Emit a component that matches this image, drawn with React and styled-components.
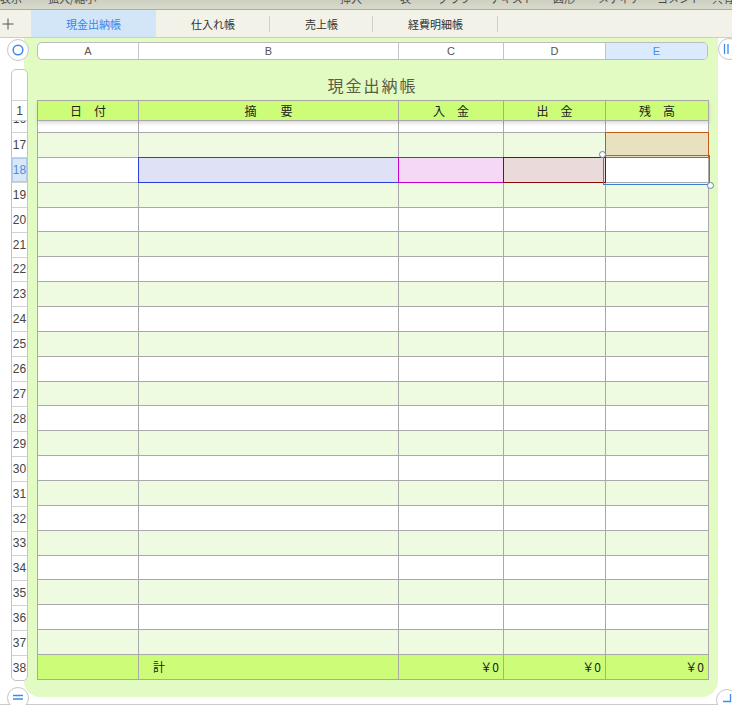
import React from 'react';
import styled, { createGlobalStyle } from 'styled-components';

const GlobalStyle = createGlobalStyle`
  html, body {
    margin: 0;
    padding: 0;
    background: #fff;
  }
  body {
    font-family: "Noto Sans CJK JP", "Noto Sans", sans-serif;
  }
`;

// column widths of the sheet (A..E), last one takes the rest
const GRID = '101px 260px 105px 102px 1fr';
const SHEET_W = 671;
const LINE = '#a9a9a9';
const BLUE = '#3d8be8';

const menu = [
  { label: '表示', w: 48 },
  { label: '拡大/縮小', w: 292 },
  { label: '挿入', w: 60 },
  { label: '表', w: 38 },
  { label: 'グラフ', w: 52 },
  { label: 'テキスト', w: 63 },
  { label: '図形', w: 45 },
  { label: 'メディア', w: 59 },
  { label: 'コメント', w: 55 },
  { label: '共有', w: 30 },
];

const tabs = [
  { label: '現金出納帳', active: true },
  { label: '仕入れ帳', sep: true },
  { label: '売上帳', sep: true },
  { label: '経費明細帳', sep: true },
];

const heads = ['日　付', '摘　　要', '入　金', '出　金', '残　高'];
const letters = ['A', 'B', 'C', 'D', 'E'];
const rows = Array.from({ length: 21 }, (_, i) => 17 + i); // 17..37

const Window = styled.div`
  position: relative;
  width: 732px;
  height: 705px;
  overflow: hidden;
  background: #fff;
`;

const MenuStrip = styled.div`
  display: flex;
  height: 9px;
  overflow: hidden;
  background: linear-gradient(#cdcfc0, #d8dacb);
  border-bottom: 1px solid #abad9f;
`;

const MenuItem = styled.span`
  flex: none;
  width: ${p => p.$w}px;
  margin-top: -7px;
  font-size: 11px;
  line-height: 11px;
  color: #4a4a4a;
  white-space: nowrap;
`;

const TabBar = styled.div`
  display: flex;
  height: 27px;
  background: #f2f2e9;
  border-bottom: 1px solid #cdcdc4;
`;

const AddButton = styled.div`
  width: 31px;
  display: flex;
  align-items: center;
  padding-left: 2px;
  box-sizing: border-box;
`;

const Tab = styled.div`
  position: relative;
  display: flex;
  align-items: center;
  padding: 0 35px;
  font-size: 11px;
  color: ${p => (p.$active ? '#3a84ee' : '#333')};
  background: ${p => (p.$active ? '#d3e6f8' : 'transparent')};

  &::after {
    content: '';
    position: absolute;
    right: 0;
    top: 6px;
    bottom: 5px;
    width: 1px;
    background: ${p => (p.$sep ? '#d0d0c7' : 'transparent')};
  }
`;

const Main = styled.div`
  display: flex;
  height: 659px;
`;

const Gutter = styled.div`
  position: relative;
  z-index: 1;
  flex: none;
  width: 24px;
  display: flex;
  flex-direction: column;
`;

const RoundButton = styled.div`
  width: 22px;
  height: 22px;
  box-sizing: border-box;
  border-radius: 50%;
  border: 1px solid #c6c6c6;
  background: #fff;
  display: flex;
  align-items: center;
  justify-content: center;
`;

const CornerButton = styled(RoundButton)`
  position: absolute;
  left: ${p => p.$x}px;
  top: ${p => p.$y}px;
`;

const TopButton = styled(RoundButton)`
  margin: 1px 0 0 7px;
  flex: none;
`;

const RowHeads = styled.div`
  margin: 8px 0 0 11px;
  width: 17px;
  flex: none;
  box-sizing: border-box;
  border: 1px solid #c4c4c4;
  border-radius: 5px;
  background: #fff;
  overflow: hidden;
  display: flex;
  flex-direction: column;
`;

const RowHead = styled.div`
  flex: ${p => (p.$h ? 'none' : 1)};
  height: ${p => (p.$h ? `${p.$h}px` : 'auto')};
  min-height: 0;
  box-sizing: border-box;
  border-bottom: ${p => (p.$last ? 'none' : '1px solid #d2d2d2')};
  display: flex;
  align-items: ${p => (p.$cut ? 'flex-start' : 'center')};
  justify-content: center;
  overflow: hidden;
  font-family: "Liberation Sans", Arial, sans-serif;
  font-size: 12px;
  line-height: 12px;
  color: ${p => (p.$sel ? '#4a8fe0' : '#444')};
  background: ${p => (p.$sel ? '#d8e8f8' : 'transparent')};
  box-shadow: ${p => (p.$sel ? 'inset 0 0 0 1px #b2cdec' : 'none')};

  span {
    margin-top: ${p => (p.$cut ? '-8px' : '0')};
  }
`;

const BodyRows = styled.div`
  height: 547px;
  display: flex;
  flex-direction: column;
`;

const Canvas = styled.div`
  flex: none;
  width: 694px;
  height: 659px;
  box-sizing: border-box;
  padding: 4px 10px 0 13px;
  background: #e1fbc3;
  border-radius: 0 0 16px 16px;
`;

const ColumnBar = styled.div`
  display: grid;
  grid-template-columns: ${GRID};
  width: ${SHEET_W}px;
  height: 18px;
  box-sizing: border-box;
  border: 1px solid #bcbcbc;
  border-radius: 5px;
  background: #fff;
  overflow: hidden;
`;

const ColumnLetter = styled.div`
  display: flex;
  align-items: center;
  justify-content: center;
  font-family: "Liberation Sans", Arial, sans-serif;
  font-size: 11px;
  color: ${p => (p.$sel ? '#4a8fe0' : '#555')};
  background: ${p => (p.$sel ? '#dbeafc' : 'transparent')};
  border-right: ${p => (p.$last ? 'none' : '1px solid #c4c4c4')};
`;

const Title = styled.div`
  width: ${SHEET_W}px;
  height: 40px;
  box-sizing: border-box;
  padding-top: 15px;
  text-align: center;
  font-size: 16px;
  line-height: 20px;
  letter-spacing: 2px;
  color: #5b5b48;
`;

const Table = styled.div`
  width: ${SHEET_W}px;
  border-top: 1px solid ${LINE};
  border-left: 1px solid ${LINE};
  display: flex;
  flex-direction: column;
`;

const Row = styled.div`
  position: relative;
  z-index: ${p => (p.$head ? 2 : 'auto')};
  display: grid;
  grid-template-columns: ${GRID};
  flex: ${p => (p.$h ? 'none' : 1)};
  height: ${p => (p.$h ? `${p.$h}px` : 'auto')};
  min-height: 0;
  background: ${p => p.$bg};
  box-shadow: ${p => (p.$head ? '0 2px 4px rgba(0,0,0,0.16)' : 'none')};
`;

const Cell = styled.div`
  position: relative;
  box-sizing: border-box;
  border-right: 1px solid ${LINE};
  border-bottom: 1px solid ${LINE};
  background: ${p => p.$bg || 'transparent'};
  display: flex;
  align-items: center;
  justify-content: ${p => p.$align || 'flex-start'};
  padding: ${p => p.$pad || '0'};
  font-size: 12px;
  color: #222;
  white-space: pre;

  &::after {
    content: '';
    display: ${p => (p.$mark ? 'block' : 'none')};
    position: absolute;
    inset: -1px;
    border: 1px solid ${p => p.$mark || 'transparent'};
  }
`;

const Selection = styled.div`
  position: absolute;
  z-index: 3;
  top: -3px;
  left: -3px;
  right: -2px;
  bottom: -3px;
  border: 1px solid #3a7fd0;
`;

const Handle = styled.div`
  position: absolute;
  width: 7px;
  height: 7px;
  box-sizing: border-box;
  border-radius: 50%;
  background: #fff;
  border: 1px solid #6b7fae;
  ${p => (p.$end ? 'right: -5px; bottom: -5px;' : 'left: -5px; top: -5px;')}
`;

const BottomEdge = styled.div`
  height: 7px;
  border-bottom: 1px solid #cbcbcb;
`;

const PlusIcon = () => (
  <svg width="12" height="12" viewBox="0 0 12 12">
    <path d="M6 0.5v11M0.5 6h11" stroke="#555" strokeWidth="1" fill="none" />
  </svg>
);

const RingIcon = () => (
  <svg width="12" height="12" viewBox="0 0 12 12">
    <circle cx="6" cy="6" r="4.8" stroke={BLUE} strokeWidth="1.5" fill="none" />
  </svg>
);

const PauseIcon = () => (
  <svg width="12" height="12" viewBox="0 0 12 12" style={{ marginLeft: -6 }}>
    <path d="M4.5 1v10M8 1v10" stroke={BLUE} strokeWidth="1.3" fill="none" />
  </svg>
);

const EqualIcon = () => (
  <svg width="12" height="12" viewBox="0 0 12 12" style={{ marginTop: -2 }}>
    <path d="M1 4.5h10M1 8h10" stroke={BLUE} strokeWidth="1.3" fill="none" />
  </svg>
);

const CornerIcon = () => (
  <svg width="12" height="12" viewBox="0 0 12 12" style={{ marginTop: -4 }}>
    <path d="M9.5 2v7.5H2" stroke={BLUE} strokeWidth="1.3" fill="none" />
  </svg>
);

const marks17 = [{}, {}, {}, {}, { bg: '#e9e0bf', mark: '#c45a12' }];
const marks18 = [
  {},
  { bg: '#dfe1f7', mark: '#2b3ee0' },
  { bg: '#f5d8f6', mark: '#c800d0' },
  { bg: '#ebdada', mark: '#8a0a0a' },
  { bg: '#fff', sel: true },
];

export default function App() {
  return (
    <Window>
      <GlobalStyle />
      <MenuStrip>
        {menu.map(m => (
          <MenuItem key={m.label} $w={m.w}>{m.label}</MenuItem>
        ))}
      </MenuStrip>

      <TabBar>
        <AddButton><PlusIcon /></AddButton>
        {tabs.map(t => (
          <Tab key={t.label} $active={t.active} $sep={t.sep}>{t.label}</Tab>
        ))}
      </TabBar>

      <Main>
        <Gutter>
          <TopButton><RingIcon /></TopButton>
          <RowHeads>
            <RowHead $h={31} />
            <RowHead $h={20}><span>1</span></RowHead>
            <RowHead $h={12} $cut><span>16</span></RowHead>
            <BodyRows>
              {rows.map(n => (
                <RowHead key={n} $sel={n === 18}><span>{n}</span></RowHead>
              ))}
              <RowHead $last><span>38</span></RowHead>
            </BodyRows>
          </RowHeads>
        </Gutter>

        <Canvas>
          <ColumnBar>
            {letters.map((l, i) => (
              <ColumnLetter key={l} $sel={l === 'E'} $last={i === 4}>{l}</ColumnLetter>
            ))}
          </ColumnBar>

          <Title>現金出納帳</Title>

          <Table>
            <Row $head $h={20} $bg="#cdfd78">
              {heads.map(h => (
                <Cell key={h} $align="center">{h}</Cell>
              ))}
            </Row>
            <Row $h={12} $bg="#fff">
              {letters.map(l => <Cell key={l} />)}
            </Row>
            <BodyRows>
              {rows.map(n => {
                const marks = n === 17 ? marks17 : n === 18 ? marks18 : [];
                return (
                  <Row key={n} $bg={n % 2 ? '#eefbe0' : '#fff'}>
                    {letters.map((l, i) => {
                      const m = marks[i] || {};
                      return (
                        <Cell key={l} $bg={m.bg} $mark={m.mark}>
                          {m.sel && (
                            <Selection>
                              <Handle />
                              <Handle $end />
                            </Selection>
                          )}
                        </Cell>
                      );
                    })}
                  </Row>
                );
              })}
              <Row $bg="#cdfd78">
                <Cell />
                <Cell $pad="0 0 0 14px">計</Cell>
                <Cell $align="flex-end" $pad="0 4px 0 0">￥0</Cell>
                <Cell $align="flex-end" $pad="0 4px 0 0">￥0</Cell>
                <Cell $align="flex-end" $pad="0 4px 0 0">￥0</Cell>
              </Row>
            </BodyRows>
          </Table>
        </Canvas>
      </Main>

      <BottomEdge />

      <CornerButton $x={718} $y={38}><PauseIcon /></CornerButton>
      <CornerButton $x={7} $y={687}><EqualIcon /></CornerButton>
      <CornerButton $x={716} $y={689}><CornerIcon /></CornerButton>
    </Window>
  );
}
